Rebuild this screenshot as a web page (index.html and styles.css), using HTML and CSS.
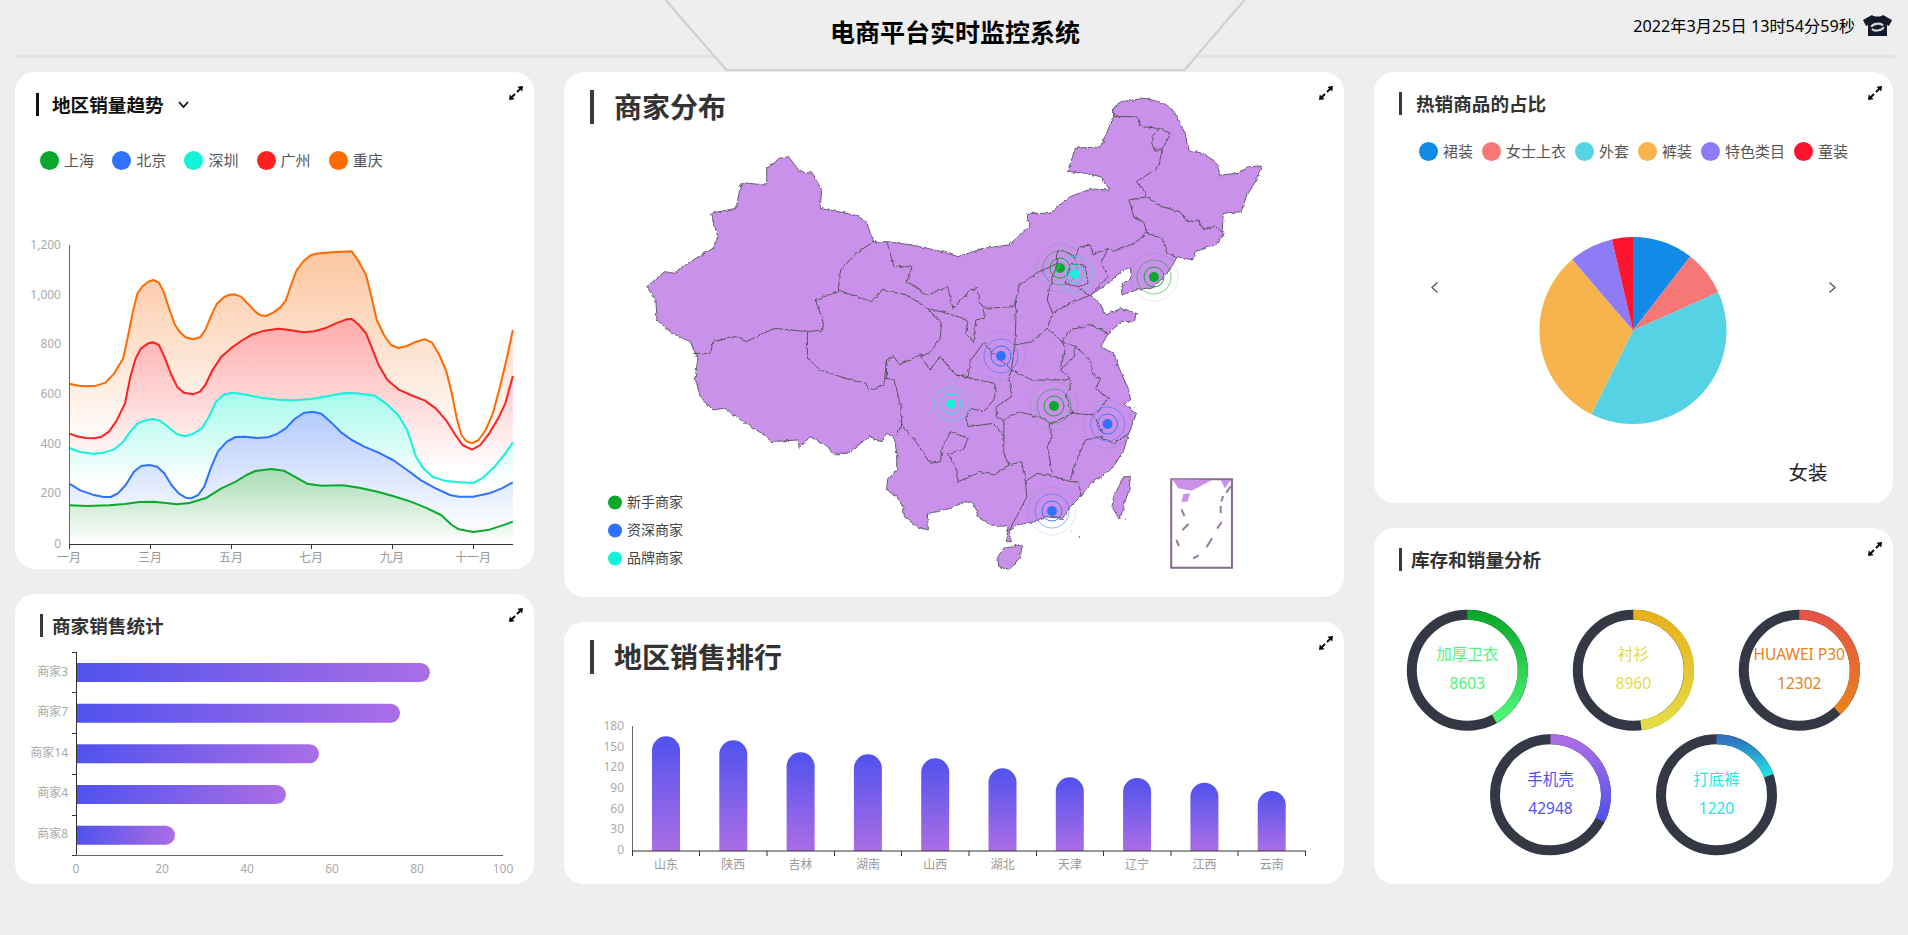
FILE: index.html
```html
<!DOCTYPE html>
<html lang="zh-CN">
<head>
<meta charset="utf-8">
<title>电商平台实时监控系统</title>
<link rel="stylesheet" href="styles.css">
</head>
<body>
<header class="topbar">
  <svg class="topbar-shape" viewBox="0 0 581 72"><path d="M1 0 L62 70 L520 70 L580 0"/></svg>
  <div></div>
  <h1 class="topbar-title">电商平台实时监控系统</h1>
  <div class="topbar-right">
    <span class="clock">2022年3月25日 13时54分59秒</span>
    <svg class="shirt" viewBox="0 0 29 21"><path class="shirt-body" d="M9 0 C11 2 18 2 20 0 L29 5 L26 11 L24 10 L24 21 L5 21 L5 10 L3 11 L0 5 Z"/><path class="shirt-ring" d="M8.500 12 C9 9 17 7 20 10.500 M20.500 12 C20 15 12 17 9 14"/></svg>
  </div>
</header>

<main class="board">
  <section class="col">
    <article class="card card-trend">
      <h2 class="card-title title-black gap-13"><i class="title-bar"></i>地区销量趋势<svg class="title-chevron" viewBox="0 0 11 7"><path d="M1 1 L5.500 6 L10 1"/></svg></h2>
      <svg class="expand" viewBox="0 0 14 14"><path class="expand-line" d="M3 11 L6 8 M8 6 L11 3"/><path d="M14 0 L8.500 .8 L13.200 5.500 Z M0 14 L5.500 13.200 L.8 8.500 Z"/></svg>
      <ul class="legend legend-trend">
        <li class="legend-item"><i class="dot c-green"></i>上海</li>
        <li class="legend-item"><i class="dot c-blue"></i>北京</li>
        <li class="legend-item"><i class="dot c-cyan"></i>深圳</li>
        <li class="legend-item"><i class="dot c-red"></i>广州</li>
        <li class="legend-item"><i class="dot c-orange"></i>重庆</li>
      </ul>
      <svg class="chart" viewBox="15 190 519 379">
        <defs>
          <linearGradient id="aOrange" gradientUnits="userSpaceOnUse" x1="0" y1="63" x2="0" y2="650"><stop offset="0" stop-color="#fcc6a0"/><stop offset="1" stop-color="#fff"/></linearGradient>
          <linearGradient id="aRed" gradientUnits="userSpaceOnUse" x1="0" y1="265" x2="0" y2="720"><stop offset="0" stop-color="#ffaaaa"/><stop offset="1" stop-color="#fff"/></linearGradient>
          <linearGradient id="aCyan" gradientUnits="userSpaceOnUse" x1="0" y1="488" x2="0" y2="765"><stop offset="0" stop-color="#a6fbec"/><stop offset="1" stop-color="#fff"/></linearGradient>
          <linearGradient id="aBlue" gradientUnits="userSpaceOnUse" x1="0" y1="545" x2="0" y2="905"><stop offset="0" stop-color="#b3cafd"/><stop offset="1" stop-color="#fff"/></linearGradient>
          <linearGradient id="aGreen" gradientUnits="userSpaceOnUse" x1="0" y1="717" x2="0" y2="942"><stop offset="0" stop-color="#a6dcb2"/><stop offset="1" stop-color="#fff"/></linearGradient>
        </defs>
        <g transform="translate(0 230) scale(.35714 .33333)">
          <path fill="url(#aOrange)" d="M194 461 L220 467 245 469 270 467 295 458 320 430 345 385 358 320 372 245 385 190 400 168 415 155 430 150 445 158 458 185 475 240 490 285 505 308 520 322 540 328 560 322 575 300 590 260 607 222 625 203 640 195 657 193 675 200 695 222 715 245 730 256 745 258 765 248 785 232 800 212 815 165 830 122 850 93 872 74 900 69 940 66 985 64 1005 95 1025 135 1040 200 1055 270 1075 315 1095 345 1115 354 1140 348 1165 335 1190 328 1210 338 1230 375 1250 425 1265 490 1280 570 1292 615 1305 633 1322 640 1340 630 1360 600 1380 550 1400 470 1420 380 1436 300 L1436 942 194 942 Z"/>
          <path class="line s-orange" d="M194 461 L220 467 245 469 270 467 295 458 320 430 345 385 358 320 372 245 385 190 400 168 415 155 430 150 445 158 458 185 475 240 490 285 505 308 520 322 540 328 560 322 575 300 590 260 607 222 625 203 640 195 657 193 675 200 695 222 715 245 730 256 745 258 765 248 785 232 800 212 815 165 830 122 850 93 872 74 900 69 940 66 985 64 1005 95 1025 135 1040 200 1055 270 1075 315 1095 345 1115 354 1140 348 1165 335 1190 328 1210 338 1230 375 1250 425 1265 490 1280 570 1292 615 1305 633 1322 640 1340 630 1360 600 1380 550 1400 470 1420 380 1436 300"/>
          <path fill="url(#aRed)" d="M194 610 L215 619 240 624 265 625 285 620 305 605 325 575 350 520 365 440 380 385 395 355 415 340 430 337 445 345 460 380 480 435 497 472 515 488 540 493 560 485 575 465 595 420 620 380 650 352 680 330 705 314 740 302 780 296 810 300 850 307 880 304 910 295 940 280 970 268 985 267 1005 285 1025 310 1040 350 1060 405 1085 450 1115 478 1150 495 1190 512 1220 535 1250 572 1275 615 1295 645 1322 659 1345 645 1370 610 1395 565 1415 520 1436 438 L1436 942 194 942 Z"/>
          <path class="line s-red" d="M194 610 L215 619 240 624 265 625 285 620 305 605 325 575 350 520 365 440 380 385 395 355 415 340 430 337 445 345 460 380 480 435 497 472 515 488 540 493 560 485 575 465 595 420 620 380 650 352 680 330 705 314 740 302 780 296 810 300 850 307 880 304 910 295 940 280 970 268 985 267 1005 285 1025 310 1040 350 1060 405 1085 450 1115 478 1150 495 1190 512 1220 535 1250 572 1275 615 1295 645 1322 659 1345 645 1370 610 1395 565 1415 520 1436 438"/>
          <path fill="url(#aCyan)" d="M194 654 L225 666 260 671 290 668 320 658 345 635 365 605 385 580 410 570 430 567 450 573 470 590 495 612 517 619 540 612 565 595 585 560 605 515 625 495 648 488 680 492 730 503 780 509 820 511 870 507 920 498 965 489 1000 490 1050 497 1080 520 1115 555 1140 600 1165 680 1185 715 1212 741 1245 752 1285 757 1325 759 1350 745 1385 710 1415 670 1436 637 L1436 942 194 942 Z"/>
          <path class="line s-cyan" d="M194 654 L225 666 260 671 290 668 320 658 345 635 365 605 385 580 410 570 430 567 450 573 470 590 495 612 517 619 540 612 565 595 585 560 605 515 625 495 648 488 680 492 730 503 780 509 820 511 870 507 920 498 965 489 1000 490 1050 497 1080 520 1115 555 1140 600 1165 680 1185 715 1212 741 1245 752 1285 757 1325 759 1350 745 1385 710 1415 670 1436 637"/>
          <path fill="url(#aBlue)" d="M194 761 L225 781 260 794 290 801 310 801 330 790 352 765 375 725 395 708 418 705 440 710 460 730 480 765 500 790 520 803 535 805 555 795 572 770 590 715 610 665 635 635 660 621 685 620 720 624 750 622 775 612 800 595 825 567 850 549 875 545 900 551 925 575 955 607 985 630 1020 650 1060 668 1100 690 1140 720 1180 752 1220 775 1260 795 1285 800 1325 800 1370 790 1405 775 1436 757 L1436 942 194 942 Z"/>
          <path class="line s-blue" d="M194 761 L225 781 260 794 290 801 310 801 330 790 352 765 375 725 395 708 418 705 440 710 460 730 480 765 500 790 520 803 535 805 555 795 572 770 590 715 610 665 635 635 660 621 685 620 720 624 750 622 775 612 800 595 825 567 850 549 875 545 900 551 925 575 955 607 985 630 1020 650 1060 668 1100 690 1140 720 1180 752 1220 775 1260 795 1285 800 1325 800 1370 790 1405 775 1436 757"/>
          <path fill="url(#aGreen)" d="M194 826 L245 828 305 826 350 822 390 816 430 815 465 819 495 823 530 819 575 805 620 775 660 755 690 735 715 723 760 717 795 722 825 740 860 761 900 767 960 766 1010 774 1060 786 1100 798 1150 815 1190 832 1235 855 1265 885 1285 898 1325 906 1370 899 1405 887 1436 875 L1436 942 194 942 Z"/>
          <path class="line s-green" d="M194 826 L245 828 305 826 350 822 390 816 430 815 465 819 495 823 530 819 575 805 620 775 660 755 690 735 715 723 760 717 795 722 825 740 860 761 900 767 960 766 1010 774 1060 786 1100 798 1150 815 1190 832 1235 855 1265 885 1285 898 1325 906 1370 899 1405 887 1436 875"/>
        </g>
        <path class="axis-y" d="M69.500 245 V544"/>
        <path class="axis" d="M69 544.500 H513 M69.500 544 V549 M150.500 544 V549 M231.500 544 V549 M311.500 544 V549 M392.500 544 V549 M473.500 544 V549"/>
        <g class="lbl lbl-end">
          <text x="61" y="244">1,200</text><text x="61" y="294">1,000</text><text x="61" y="343">800</text><text x="61" y="393">600</text><text x="61" y="443">400</text><text x="61" y="492">200</text><text x="61" y="543">0</text>
        </g>
        <g class="lbl lbl-mid lbl-x">
          <text x="69" y="557">一月</text><text x="150" y="557">三月</text><text x="231" y="557">五月</text><text x="311" y="557">七月</text><text x="392" y="557">九月</text><text x="473" y="557">十一月</text>
        </g>
      </svg>
    </article>

    <article class="card card-seller">
      <h2 class="card-title gap-9"><i class="title-bar"></i>商家销售统计</h2>
      <svg class="expand" viewBox="0 0 14 14"><path class="expand-line" d="M3 11 L6 8 M8 6 L11 3"/><path d="M14 0 L8.500 .8 L13.200 5.500 Z M0 14 L5.500 13.200 L.8 8.500 Z"/></svg>
      <svg class="chart" viewBox="15 640 519 244">
        <defs>
          <linearGradient id="barH" x1="0" y1="0" x2="1" y2="0"><stop offset="0" stop-color="#5052ee"/><stop offset="1" stop-color="#ab6ee5"/></linearGradient>
        </defs>
        <path fill="url(#barH)" d="M76.500 663 H420.500 A9.500 9.500 0 0 1 420.500 682 H76.500 Z"/>
        <path fill="url(#barH)" d="M76.500 703.700 H390.500 A9.500 9.500 0 0 1 390.500 722.700 H76.500 Z"/>
        <path fill="url(#barH)" d="M76.500 744.300 H309.500 A9.500 9.500 0 0 1 309.500 763.300 H76.500 Z"/>
        <path fill="url(#barH)" d="M76.500 785 H276.500 A9.500 9.500 0 0 1 276.500 804 H76.500 Z"/>
        <path fill="url(#barH)" d="M76.500 825.700 H165.500 A9.500 9.500 0 0 1 165.500 844.700 H76.500 Z"/>
        <path class="axis" d="M76.500 652 V855.500 M72 652.500 H76 M72 692.500 H76 M72 733.500 H76 M72 774.500 H76 M72 815.500 H76 M72 855.500 H76"/>
        <path class="axis-y" d="M76 855.500 H503"/>
        <g class="lbl lbl-end">
          <text x="68" y="671">商家3</text><text x="68" y="711">商家7</text><text x="68" y="752">商家14</text><text x="68" y="792">商家4</text><text x="68" y="833">商家8</text>
        </g>
        <g class="lbl lbl-mid">
          <text x="76" y="868">0</text><text x="162" y="868">20</text><text x="247" y="868">40</text><text x="332" y="868">60</text><text x="417" y="868">80</text><text x="503" y="868">100</text>
        </g>
      </svg>
    </article>
  </section>

  <section class="col">
    <article class="card card-map">
      <svg class="map-canvas" viewBox="564 72 780 525">
        <defs>
          <filter id="rough" x="-5%" y="-5%" width="110%" height="110%">
            <feTurbulence type="fractalNoise" baseFrequency=".22" numOctaves="2" seed="4"/>
            <feDisplacementMap in="SourceGraphic" scale="3.500" xChannelSelector="R" yChannelSelector="G"/>
          </filter>
        </defs>
        <g filter="url(#rough)">
          <g transform="translate(560 0) scale(.5102 .33333)">
            <path class="land" d="M1085 320 L1100 305 1145 295 1175 305 1195 320 1210 350 1225 400 1232 450 1260 460 1285 485 1295 525 1330 520 1350 500 1375 498 1365 540 1345 590 1335 635 1300 640 1298 690 1302 700 1285 735 1245 755 1240 780 1210 770 1195 810 1165 860 1130 870 1102 885 1100 860 1120 830 1118 805 1100 815 1065 860 1040 885 1060 915 1070 945 1100 925 1130 940 1125 965 1100 965 1075 1000 1060 1040 1085 1060 1100 1120 1115 1170 1118 1200 1105 1210 1130 1240 1115 1300 1105 1350 1085 1400 1060 1430 1040 1450 1020 1490 1000 1520 985 1555 950 1550 930 1565 895 1575 880 1590 885 1625 875 1625 878 1580 845 1575 820 1550 810 1510 795 1505 765 1525 740 1535 720 1540 722 1590 700 1580 675 1550 672 1520 660 1490 640 1470 642 1440 660 1410 660 1360 655 1310 640 1300 630 1325 605 1310 565 1360 535 1362 525 1340 490 1310 470 1345 465 1320 415 1325 395 1300 350 1255 320 1225 300 1230 275 1190 265 1135 270 1075 255 1025 220 1000 190 960 188 900 170 860 205 815 225 820 250 790 300 745 310 710 295 640 345 625 355 548 405 555 405 505 430 475 448 470 470 515 495 520 513 570 510 625 580 645 600 665 615 725 640 725 690 735 750 755 780 770 830 745 880 735 920 680 915 640 960 640 1000 590 1040 567 1078 570 1060 530 1030 520 995 515 1010 445 1060 440 1085 350 Z"/>
            <path class="land" d="M858 1670 L870 1645 905 1633 903 1670 880 1710 860 1700 Z M1105 1430 L1118 1430 1115 1470 1097 1560 1082 1520 1085 1490 Z"/>
            <path class="border" d="M1085 350 L1130 350 1140 380 1175 385 1160 410 1160 430 1165 450 1180 450 1175 490 1165 510 1130 545 1145 575 1150 590 1115 600 1125 650 1145 670 1150 700 1125 730 1085 755 1075 745 1045 765 1040 735 1020 740 1010 770 990 755 975 750 975 790 940 815 930 825 900 855 890 920 M1175 385 L1197 400 1180 450 M1150 590 L1180 620 1215 635 1230 665 1250 660 1260 685 1285 680 1300 700 M1150 700 L1180 715 1190 760 1210 770 M1075 745 L1060 790 1075 830 1050 870 1040 885 M975 790 L960 860 955 900 965 940 955 985 925 1025 890 1035 M1000 790 L990 850 1015 860 1035 885 M1000 790 L1030 800 1035 850 1015 860 M1040 885 L1000 910 965 940 M615 725 L580 760 550 810 545 875 500 900 515 960 515 990 485 995 420 985 365 1025 345 1010 300 1025 295 1060 262 1060 M640 725 L655 800 690 800 680 845 720 885 760 860 770 925 805 870 820 865 820 905 835 925 890 920 M545 870 L610 905 630 870 680 885 720 925 770 945 800 960 795 1000 810 1025 815 960 832 955 830 925 M485 995 L485 1075 510 1110 560 1135 600 1150 605 1170 635 1155 640 1080 655 1070 665 1095 705 1065 725 1110 745 1070 775 1125 800 1130 805 1080 830 1030 885 1110 M720 925 L748 970 745 1015 725 1060 705 1065 M640 1080 L640 1135 655 1140 668 1220 670 1275 660 1305 M670 1275 L700 1330 725 1390 745 1385 750 1340 765 1295 800 1315 790 1350 760 1360 775 1400 780 1445 825 1415 850 1425 880 1395 870 1360 870 1260 M775 1125 L850 1150 855 1170 850 1200 830 1235 805 1225 795 1250 800 1280 850 1270 870 1310 M885 1110 L880 1135 885 1190 855 1220 855 1250 870 1260 900 1235 935 1250 950 1255 960 1272 1005 1240 1045 1245 M958 1275 L965 1310 955 1340 965 1420 M880 1395 L905 1385 912 1445 915 1490 895 1550 880 1590 M912 1445 L935 1420 970 1430 1000 1445 1015 1445 1022 1490 M1000 1445 L1005 1410 1030 1320 1060 1310 1085 1330 1115 1300 M1045 1245 L1065 1300 1060 1310 M885 1110 L925 1140 990 1140 1000 1135 1000 1170 990 1185 1005 1240 M895 900 L892 1020 885 1110 M980 1110 L1005 1075 1010 1040 1040 1080 1045 1125 1060 1135 1050 1165 1075 1195 1050 1245 M1000 1135 L980 1110 990 1050 985 1025 955 985 M1010 1040 L985 1025 1000 990 1040 975 1075 1000"/>
            <path class="isles" d="M1072 1495 v2 M1108 1555 v3 M1018 1608 v5 M1003 1594 v2 M1126 1222 v2 M1122 1232 v3 M1118 1242 v3"/>
          </g>
        </g>
        <g transform="translate(560 0) scale(.5102 .33333)">
          <rect class="inset" x="1198" y="1438" width="119" height="265"/>
          <path class="land-flat" d="M1200 1438 L1212 1465 1238 1472 1278 1440 Z M1295 1440 L1315 1440 1303 1465 Z M1222 1482 L1235 1480 1230 1505 1218 1505 Z"/>
          <path class="inset-dash" d="M1218 1528 L1224 1548 M1232 1572 L1220 1590 M1208 1620 L1213 1638 M1252 1666 L1241 1675 M1278 1615 L1267 1642 M1297 1566 L1288 1586 M1295 1518 L1295 1540 M1300 1488 L1296 1504 M1315 1458 L1306 1478"/>
        </g>
        <g class="ripple r-green"><circle cx="1060" cy="268" r="10"/><circle class="r2" cx="1060" cy="268" r="17"/><circle class="r3" cx="1060" cy="268" r="24"/><circle class="core" cx="1060" cy="268" r="5"/></g>
        <g class="ripple r-cyan"><circle cx="1075" cy="274" r="9"/><circle class="r2" cx="1075" cy="274" r="18"/><circle class="core" cx="1075" cy="274" r="5"/></g>
        <g class="ripple r-green"><circle cx="1154" cy="277" r="10"/><circle class="r2" cx="1154" cy="277" r="17"/><circle class="r3" cx="1154" cy="277" r="24"/><circle class="core" cx="1154" cy="277" r="5"/></g>
        <g class="ripple r-blue"><circle cx="1001" cy="356" r="10"/><circle class="r2" cx="1001" cy="356" r="17"/><circle class="r3" cx="1001" cy="356" r="24"/><circle class="core" cx="1001" cy="356" r="5"/></g>
        <g class="ripple r-cyan"><circle cx="951" cy="404" r="10"/><circle class="r2" cx="951" cy="404" r="17"/><circle class="r3" cx="951" cy="404" r="24"/><circle class="core" cx="951" cy="404" r="5"/></g>
        <g class="ripple r-green"><circle cx="1054" cy="406" r="10"/><circle class="r2" cx="1054" cy="406" r="17"/><circle class="r3" cx="1054" cy="406" r="24"/><circle class="core" cx="1054" cy="406" r="5"/></g>
        <g class="ripple r-blue"><circle cx="1107.500" cy="424" r="10"/><circle class="r2" cx="1107.500" cy="424" r="17"/><circle class="r3" cx="1107.500" cy="424" r="24"/><circle class="core" cx="1107.500" cy="424" r="5"/></g>
        <g class="ripple r-blue"><circle cx="1052" cy="511" r="10"/><circle class="r2" cx="1052" cy="511" r="17"/><circle class="r3" cx="1052" cy="511" r="24"/><circle class="core" cx="1052" cy="511" r="5"/></g>
        <g class="map-legend">
          <circle class="f-green" cx="615" cy="502.500" r="7"/><text x="627" y="501">新手商家</text>
          <circle class="f-blue" cx="615" cy="530.500" r="7"/><text x="627" y="529">资深商家</text>
          <circle class="f-cyan" cx="615" cy="558.500" r="7"/><text x="627" y="557">品牌商家</text>
        </g>
      </svg>
      <h2 class="card-title title-big"><i class="title-bar"></i>商家分布</h2>
      <svg class="expand" viewBox="0 0 14 14"><path class="expand-line" d="M3 11 L6 8 M8 6 L11 3"/><path d="M14 0 L8.500 .8 L13.200 5.500 Z M0 14 L5.500 13.200 L.8 8.500 Z"/></svg>
    </article>

    <article class="card card-rank">
      <h2 class="card-title title-big"><i class="title-bar"></i>地区销售排行</h2>
      <svg class="expand" viewBox="0 0 14 14"><path class="expand-line" d="M3 11 L6 8 M8 6 L11 3"/><path d="M14 0 L8.500 .8 L13.200 5.500 Z M0 14 L5.500 13.200 L.8 8.500 Z"/></svg>
      <svg class="chart" viewBox="564 680 780 204">
        <defs>
          <linearGradient id="barV" x1="0" y1="0" x2="0" y2="1"><stop offset="0" stop-color="#5052ee"/><stop offset="1" stop-color="#ab6ee5"/></linearGradient>
        </defs>
        <path fill="url(#barV)" d="M652 851 V750.300 A14 14 0 0 1 680 750.300 V851 Z"/>
        <path fill="url(#barV)" d="M719.300 851 V754.300 A14 14 0 0 1 747.300 754.300 V851 Z"/>
        <path fill="url(#barV)" d="M786.600 851 V766.300 A14 14 0 0 1 814.600 766.300 V851 Z"/>
        <path fill="url(#barV)" d="M853.900 851 V768.300 A14 14 0 0 1 881.900 768.300 V851 Z"/>
        <path fill="url(#barV)" d="M921.200 851 V772.300 A14 14 0 0 1 949.200 772.300 V851 Z"/>
        <path fill="url(#barV)" d="M988.500 851 V782.300 A14 14 0 0 1 1016.500 782.300 V851 Z"/>
        <path fill="url(#barV)" d="M1055.800 851 V791.300 A14 14 0 0 1 1083.800 791.300 V851 Z"/>
        <path fill="url(#barV)" d="M1123.100 851 V792 A14 14 0 0 1 1151.100 792 V851 Z"/>
        <path fill="url(#barV)" d="M1190.400 851 V796.700 A14 14 0 0 1 1218.400 796.700 V851 Z"/>
        <path fill="url(#barV)" d="M1257.700 851 V805 A14 14 0 0 1 1285.700 805 V851 Z"/>
        <path class="axis-y" d="M632.500 726 V851"/>
        <path class="axis" d="M632 851 H1306 M632.500 851 V856 M699.500 851 V856 M767 851 V856 M834.500 851 V856 M901.500 851 V856 M969 851 V856 M1036.500 851 V856 M1103.500 851 V856 M1171 851 V856 M1238 851 V856 M1305.500 851 V856"/>
        <g class="lbl lbl-end">
          <text x="624" y="725">180</text><text x="624" y="746">150</text><text x="624" y="766">120</text><text x="624" y="787">90</text><text x="624" y="808">60</text><text x="624" y="828">30</text><text x="624" y="849">0</text>
        </g>
        <g class="lbl lbl-mid lbl-x">
          <text x="666" y="864">山东</text><text x="733.300" y="864">陕西</text><text x="800.600" y="864">吉林</text><text x="867.900" y="864">湖南</text><text x="935.200" y="864">山西</text><text x="1002.500" y="864">湖北</text><text x="1069.800" y="864">天津</text><text x="1137.100" y="864">辽宁</text><text x="1204.400" y="864">江西</text><text x="1271.700" y="864">云南</text>
        </g>
      </svg>
    </article>
  </section>

  <section class="col">
    <article class="card card-pie">
      <h2 class="card-title gap-14"><i class="title-bar"></i>热销商品的占比</h2>
      <svg class="expand" viewBox="0 0 14 14"><path class="expand-line" d="M3 11 L6 8 M8 6 L11 3"/><path d="M14 0 L8.500 .8 L13.200 5.500 Z M0 14 L5.500 13.200 L.8 8.500 Z"/></svg>
      <ul class="legend legend-pie">
        <li class="legend-item"><i class="dot p-1"></i>裙装</li>
        <li class="legend-item"><i class="dot p-2"></i>女士上衣</li>
        <li class="legend-item"><i class="dot p-3"></i>外套</li>
        <li class="legend-item"><i class="dot p-4"></i>裤装</li>
        <li class="legend-item"><i class="dot p-5"></i>特色类目</li>
        <li class="legend-item"><i class="dot p-6"></i>童装</li>
      </ul>
      <svg class="chart" viewBox="1374 170 519 333">
        <path class="f-p1" d="M1633 330.500 L1633 237 A93.500 93.500 0 0 1 1690.300 256.500 Z"/>
        <path class="f-p2" d="M1633 330.500 L1690.300 256.500 A93.500 93.500 0 0 1 1718.300 292.200 Z"/>
        <path class="f-p3" d="M1633 330.500 L1718.300 292.200 A93.500 93.500 0 0 1 1591.300 414.200 Z"/>
        <path class="f-p4" d="M1633 330.500 L1591.300 414.200 A93.500 93.500 0 0 1 1572.200 259.400 Z"/>
        <path class="f-p5" d="M1633 330.500 L1572.200 259.400 A93.500 93.500 0 0 1 1611.900 239.400 Z"/>
        <path class="f-p6" d="M1633 330.500 L1611.900 239.400 A93.500 93.500 0 0 1 1633 237 Z"/>
        <path class="pager" d="M1437.500 282.500 L1432 287.500 1437.500 292.500 M1829.500 282.500 L1835 287.500 1829.500 292.500"/>
        <text class="pie-name" x="1808" y="472">女装</text>
      </svg>
    </article>

    <article class="card card-donut">
      <h2 class="card-title gap-9"><i class="title-bar"></i>库存和销量分析</h2>
      <svg class="expand" viewBox="0 0 14 14"><path class="expand-line" d="M3 11 L6 8 M8 6 L11 3"/><path d="M14 0 L8.500 .8 L13.200 5.500 Z M0 14 L5.500 13.200 L.8 8.500 Z"/></svg>
      <svg class="chart" viewBox="1374 580 519 304">
        <defs>
          <linearGradient id="d1" x1="0" y1="0" x2="0" y2="1"><stop offset="0" stop-color="#0ba82c"/><stop offset="1" stop-color="#4ff778"/></linearGradient>
          <linearGradient id="d2" x1="0" y1="0" x2="0" y2="1"><stop offset="0" stop-color="#e8b11c"/><stop offset="1" stop-color="#e5dd45"/></linearGradient>
          <linearGradient id="d3" x1="0" y1="0" x2="0" y2="1"><stop offset="0" stop-color="#e55445"/><stop offset="1" stop-color="#e8821c"/></linearGradient>
          <linearGradient id="d4" x1="0" y1="0" x2="0" y2="1"><stop offset="0" stop-color="#ab6ee5"/><stop offset="1" stop-color="#5052ee"/></linearGradient>
          <linearGradient id="d5" x1="0" y1="0" x2="0" y2="1"><stop offset="0" stop-color="#2e72bf"/><stop offset="1" stop-color="#23e5e5"/></linearGradient>
        </defs>
        <circle class="ring" cx="1467.300" cy="670.200" r="55.500"/>
        <path class="arc" stroke="url(#d1)" d="M1467.300 614.700 A55.500 55.500 0 0 1 1494.200 718.700"/>
        <text class="donut-text t1" x="1467.300" y="654">加厚卫衣</text><text class="donut-text t1" x="1467.300" y="683">8603</text>
        <circle class="ring" cx="1633.300" cy="670.200" r="55.500"/>
        <path class="arc" stroke="url(#d2)" d="M1633.300 614.700 A55.500 55.500 0 0 1 1641 725.200"/>
        <text class="donut-text t2" x="1633.300" y="654">衬衫</text><text class="donut-text t2" x="1633.300" y="683">8960</text>
        <circle class="ring" cx="1799.300" cy="670.200" r="55.500"/>
        <path class="arc" stroke="url(#d3)" d="M1799.300 614.700 A55.500 55.500 0 0 1 1837.200 710.800"/>
        <text class="donut-text t3" x="1799.300" y="654">HUAWEI P30</text><text class="donut-text t3" x="1799.300" y="683">12302</text>
        <circle class="ring" cx="1550.500" cy="794.800" r="55.500"/>
        <path class="arc" stroke="url(#d4)" d="M1550.500 739.300 A55.500 55.500 0 0 1 1600 820"/>
        <text class="donut-text t4" x="1550.500" y="779">手机壳</text><text class="donut-text t4" x="1550.500" y="808">42948</text>
        <circle class="ring" cx="1716.500" cy="794.800" r="55.500"/>
        <path class="arc" stroke="url(#d5)" d="M1716.500 739.300 A55.500 55.500 0 0 1 1768.700 775.800"/>
        <text class="donut-text t5" x="1716.500" y="779">打底裤</text><text class="donut-text t5" x="1716.500" y="808">1220</text>
      </svg>
    </article>
  </section>
</main>
</body>
</html>
```
FILE: styles.css
```css
* { box-sizing: border-box; }
html, body { margin: 0; padding: 0; }
body {
  width: 1908px;
  height: 935px;
  overflow: hidden;
  background: #eee;
  font-family: "Noto Sans", "Noto Sans CJK SC", sans-serif;
  color: #333;
}

/* header */
.topbar {
  position: relative;
  display: grid;
  grid-template-columns: 1fr auto 1fr;
  align-items: center;
  height: 58px;
  margin: 0 13px 14px 15px;
  padding-top: 9px;
  border-bottom: 3px solid #e3e3e3;
}
.topbar-shape {
  position: absolute;
  top: 0;
  left: 50%;
  width: 581px;
  height: 72px;
  transform: translateX(-50%);
}
.topbar-shape path { fill: #eee; stroke: #d2d2d2; stroke-width: 2.500; }
.topbar-title {
  position: relative;
  margin: 0;
  font-size: 25px;
  line-height: 36px;
  font-weight: 700;
  color: #000;
}
.topbar-right {
  position: relative;
  display: flex;
  justify-content: flex-end;
  align-items: center;
  align-self: start;
  gap: 8px;
  padding-right: 3px;
  padding-top: 4.500px;
}
.clock { font-size: 16.200px; line-height: 24px; color: #000; white-space: nowrap; }
.shirt { width: 29px; height: 21px; }
.shirt-body { fill: #141a2c; }
.shirt-ring { fill: none; stroke: #d9d9d9; stroke-width: 2.200; }

/* layout */
.board {
  display: grid;
  grid-template-columns: 519px 780px 519px;
  gap: 30px;
  padding: 0 15px;
}
.col { display: flex; flex-direction: column; gap: 25px; }
.card {
  position: relative;
  display: flex;
  flex-direction: column;
  background: #fff;
  border-radius: 20px;
  overflow: hidden;
}
.card-trend { height: 497px; padding-top: 21px; }
.card-seller { height: 290px; padding-top: 20px; }
.card-map { height: 525px; padding-top: 18px; }
.card-rank { height: 262px; padding-top: 18px; }
.card-pie { height: 431px; padding-top: 20px; }
.card-donut { height: 356px; padding-top: 20px; }

/* card titles */
.card-title {
  position: relative;
  display: flex;
  align-items: center;
  height: 23px;
  margin: 0 0 0 25px;
  font-size: 18.600px;
  line-height: 23px;
  font-weight: 700;
  color: #333;
  white-space: nowrap;
}
.title-bar { display: block; width: 3px; height: 100%; background: #3a3a3a; }
.gap-9 .title-bar { margin-right: 9px; }
.gap-13 .title-bar { margin-right: 13px; }
.gap-14 .title-bar { margin-right: 14px; }
.title-black { margin-left: 21px; color: #111; }
.title-black .title-bar { background: #111; }
.title-chevron { width: 11px; height: 7px; margin-left: 14px; }
.title-chevron path { fill: none; stroke: #111; stroke-width: 1.800; }
.title-big { height: 34px; margin-left: 26px; font-size: 28px; line-height: 34px; }
.title-big .title-bar { width: 4px; margin-right: 20px; }

.expand { position: absolute; top: 14px; right: 11px; width: 14px; height: 14px; }
.expand path { fill: #000; }
.expand .expand-line { fill: none; stroke: #000; stroke-width: 1.800; }

/* legends */
.legend { display: flex; margin: 0; padding: 0; list-style: none; }
.legend-item { display: flex; align-items: center; font-size: 15px; line-height: 19px; color: #555; white-space: nowrap; }
.legend-trend { gap: 18.200px; margin-top: 35px; padding-left: 25px; }
.legend-trend .dot { margin-right: 5px; }
.legend-pie { gap: 9px; margin-top: 26.500px; padding-left: 45px; }
.legend-pie .dot { margin-right: 5px; }
.dot { display: block; width: 19px; height: 19px; border-radius: 50%; }
.c-green { background: #0ba82c; }
.c-blue { background: #2e72ff; }
.c-cyan { background: #14f2da; }
.c-red { background: #ff2020; }
.c-orange { background: #ff6a00; }
.p-1 { background: #118ae8; }
.p-2 { background: #f77777; }
.p-3 { background: #56d2e5; }
.p-4 { background: #f8b44c; }
.p-5 { background: #8e7bf8; }
.p-6 { background: #ff1430; }

/* charts */
.chart { display: block; width: 100%; flex: 1; min-height: 0; }
.card-trend .chart { margin-top: 20px; }
.card-seller .chart { margin-top: 3px; }
.card-rank .chart { margin-top: 6px; }
.card-donut .chart { margin-top: 9px; }
.card-pie .chart { margin-top: 9.500px; }

.line { fill: none; stroke-width: 2; vector-effect: non-scaling-stroke; stroke-linejoin: round; }
.s-orange { stroke: #ff6a00; }
.s-red { stroke: #ff2020; }
.s-cyan { stroke: #14f2da; }
.s-blue { stroke: #2e72ff; }
.s-green { stroke: #0ba82c; }
.axis { fill: none; stroke: #333; stroke-width: 1; }
.axis-y { fill: none; stroke: #666; stroke-width: 1; }
.lbl text { font-size: 12px; fill: #aaa; dominant-baseline: central; }
.lbl-end text { text-anchor: end; }
.lbl-mid text { text-anchor: middle; }
.lbl-x text { fill: #999; }

/* map */
.map-canvas { position: absolute; top: 0; left: 0; width: 780px; height: 525px; }
.land { fill: #c991e9; stroke: #6a5a72; stroke-width: 1; vector-effect: non-scaling-stroke; stroke-linejoin: round; }
.land-flat { fill: #c991e9; }
.border { fill: none; stroke: #5c5262; stroke-width: 1; vector-effect: non-scaling-stroke; stroke-linejoin: round; }
.isles { fill: none; stroke: #777; stroke-width: 1; vector-effect: non-scaling-stroke; }
.inset { fill: #fff; stroke: #85698f; stroke-width: 2; vector-effect: non-scaling-stroke; }
.inset-dash { fill: none; stroke: #97799f; stroke-width: 2; vector-effect: non-scaling-stroke; }
.ripple circle { fill: none; stroke-width: 1; stroke-opacity: .95; }
.ripple .r2 { stroke-opacity: .55; }
.ripple .r3 { stroke-opacity: .15; }
.ripple .core { stroke: none; }
.r-green circle { stroke: #0ba82c; }
.r-green .core, .f-green { fill: #0ba82c; }
.r-blue circle { stroke: #2e72ff; }
.r-blue .core, .f-blue { fill: #2e72ff; }
.r-cyan circle { stroke: #14f2da; }
.r-cyan .core, .f-cyan { fill: #14f2da; }
.map-legend text { font-size: 14px; fill: #444; dominant-baseline: central; }

/* pie */
.f-p1 { fill: #118ae8; }
.f-p2 { fill: #f77777; }
.f-p3 { fill: #56d2e5; }
.f-p4 { fill: #f8b44c; }
.f-p5 { fill: #8e7bf8; }
.f-p6 { fill: #ff1430; }
.pager { fill: none; stroke: #555; stroke-width: 1.300; }
.pie-name { font-size: 19.500px; fill: #222; text-anchor: middle; dominant-baseline: central; }

/* donuts */
.ring { fill: none; stroke: #343844; stroke-width: 10; }
.arc { fill: none; stroke-width: 10; }
.donut-text { font-size: 15.500px; text-anchor: middle; dominant-baseline: central; }
.t1 { fill: #4ff778; }
.t2 { fill: #e5dd45; }
.t3 { fill: #e8821c; }
.t4 { fill: #5052ee; }
.t5 { fill: #23e5e5; }
```
